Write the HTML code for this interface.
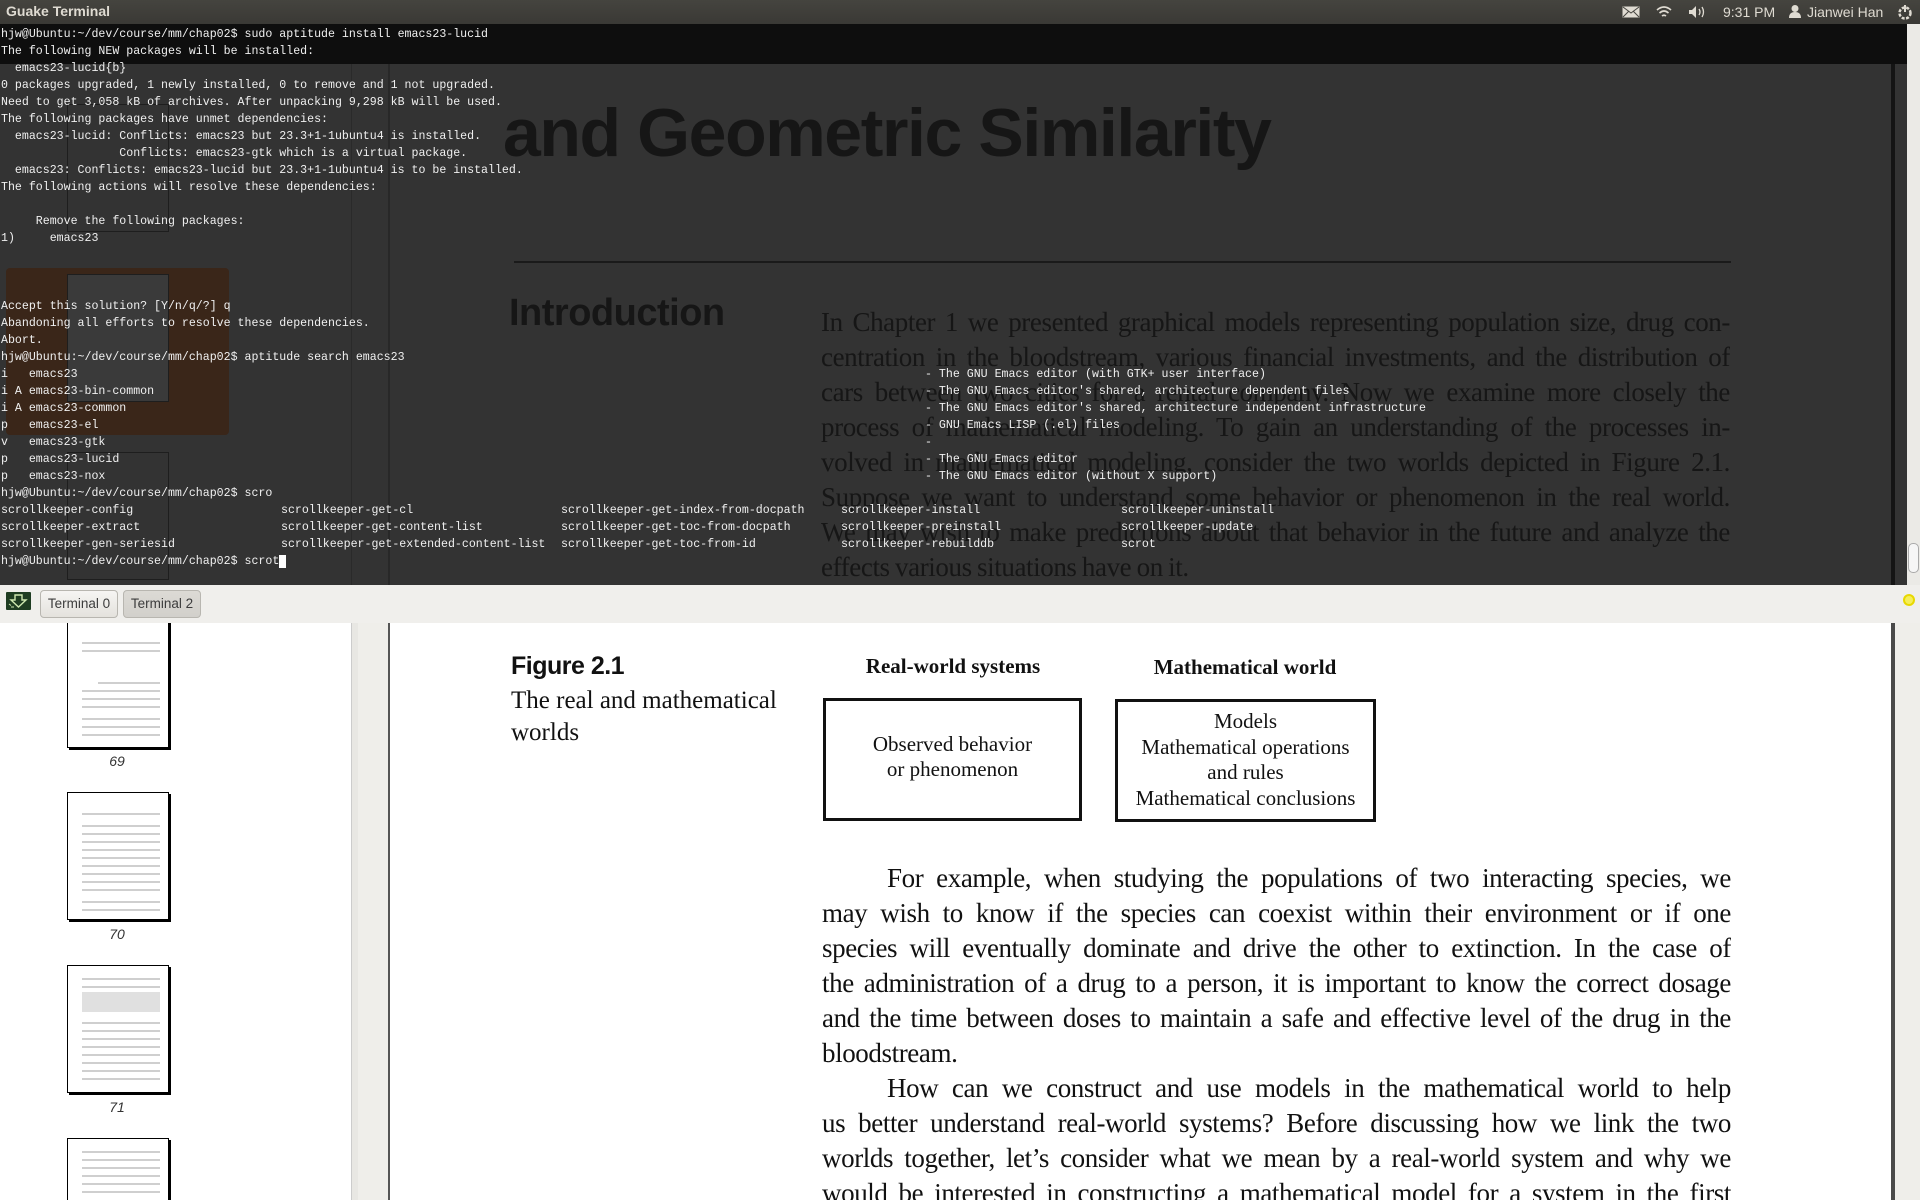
<!DOCTYPE html>
<html><head><meta charset="utf-8"><style>
*{margin:0;padding:0;box-sizing:border-box}
html,body{width:1920px;height:1200px;overflow:hidden}
body{position:relative;background:#fff;font-family:"Liberation Sans",sans-serif}
.abs{position:absolute}
#top{left:0;top:0;width:1920px;height:24px;background:linear-gradient(#45443f,#3a3935);color:#dfdbd2;font-size:14px}
#term{left:0;top:24px;width:1920px;height:561px;background:#333;overflow:hidden}
.mono{font-family:"Liberation Mono",monospace;font-size:11.6px;color:#f0f0f0;white-space:pre;line-height:17px}
.pdfd{color:#161616}
.serif{font-family:"Liberation Serif",serif}
.jl{width:909px;text-align:justify;text-align-last:justify;white-space:nowrap;height:35px;line-height:35px;font-size:27px;letter-spacing:-0.4px;word-spacing:-1px;overflow:hidden}
#tabs{left:0;top:585px;width:1920px;height:38px;background:#f0efec}
.btn{top:5px;height:28px;border:1px solid #b8b6b0;border-radius:4px;background:linear-gradient(#f6f5f3,#e4e2dd);font-size:13.5px;color:#3c3c3c;line-height:26px;padding:0 4px;white-space:nowrap;text-align:center}
.thumb{position:absolute;left:67px;width:102px;background:#fff;border:1px solid #000;box-shadow:2px 2px 0 #000;overflow:hidden}
.tl{position:absolute;left:14px;right:8px;height:2px;background:#cfcfcf}
.num{position:absolute;width:100px;left:67px;text-align:center;font-style:italic;font-size:14px;color:#333}
</style></head><body>

<div id="top" class="abs">
 <div class="abs" style="left:6px;top:3px;font-weight:bold;font-size:14px">Guake Terminal</div>
 <svg class="abs" style="left:1622px;top:6px" width="18" height="12"><rect x="0.5" y="0.5" width="17" height="11" fill="#dfdbd2"/><path d="M1 1 L9 7 L17 1 M1 11 L7 5 M17 11 L11 5" stroke="#45443f" fill="none"/></svg>
 <svg class="abs" style="left:1655px;top:5px" width="18" height="14"><path d="M2 5 Q9 -1 16 5 M4.5 8 Q9 4 13.5 8 M7 11 Q9 9.5 11 11" stroke="#dfdbd2" stroke-width="1.6" fill="none"/></svg>
 <svg class="abs" style="left:1688px;top:5px" width="20" height="14"><path d="M1 5 H4 L8 1 V13 L4 9 H1 Z" fill="#dfdbd2"/><path d="M11 4 Q13 7 11 10 M14 2 Q17 7 14 12" stroke="#dfdbd2" fill="none" stroke-width="1.3"/></svg>
 <div class="abs" style="left:1723px;top:4px;font-size:14px">9:31 PM</div>
 <svg class="abs" style="left:1788px;top:4px" width="14" height="15"><circle cx="7" cy="4.5" r="3.5" fill="#dfdbd2"/><path d="M1 14 Q1 8 7 8 Q13 8 13 14Z" fill="#dfdbd2"/></svg>
 <div class="abs" style="left:1807px;top:4px;font-size:14px">Jianwei Han</div>
 <svg class="abs" style="left:1896px;top:3px" width="18" height="18"><circle cx="9" cy="10" r="5.5" stroke="#dfdbd2" stroke-width="2.5" fill="none" stroke-dasharray="3 1.5"/><path d="M9 2 V9" stroke="#dfdbd2" stroke-width="2"/></svg>
</div>

<div id="term" class="abs">
 <div class="abs" style="left:0;top:0;width:1907px;height:40px;background:#0e0e0e"></div>
 <div class="abs" style="left:351px;top:40px;width:1px;height:521px;background:#2a2a2a"></div>
 <div class="abs" style="left:388px;top:40px;width:2px;height:521px;background:#282828"></div>
 <div class="abs" style="left:6px;top:244px;width:223px;height:167px;background:#3a2619;border-radius:4px"></div>
 <div class="abs" style="left:67px;top:80px;width:102px;height:128px;border:1px solid #1e1e1e"></div>
 <div class="abs" style="left:67px;top:250px;width:102px;height:128px;border:1px solid #1e1e1e;background:#3a3a3a"></div>
 <div class="abs" style="left:67px;top:428px;width:102px;height:128px;border:1px solid #1e1e1e"></div>
 <div class="abs" style="left:1891px;top:40px;width:4px;height:521px;background:#141414"></div>
 <div class="abs" style="left:1907px;top:0;width:13px;height:561px;background:#ebeae6"></div>
 <div class="abs" style="left:1908px;top:519px;width:11px;height:30px;background:#f6f6f6;border:1px solid #aaa;border-radius:5px"></div>
 <div class="abs pdfd" style="left:503px;top:70px;font-weight:bold;font-size:68px;letter-spacing:-1.4px;white-space:nowrap">and Geometric Similarity</div>
 <div class="abs" style="left:514px;top:237px;width:1217px;height:2px;background:#1a1a1a"></div>
 <div class="abs pdfd" style="left:509px;top:268px;font-weight:bold;font-size:38px;letter-spacing:-0.5px">Introduction</div>
 <div class="abs serif pdfd" style="left:821px;top:281px">
  <div class="jl">In Chapter 1 we presented graphical models representing population size, drug con-</div>
  <div class="jl">centration in the bloodstream, various financial investments, and the distribution of</div>
  <div class="jl">cars between two cities for a rental company. Now we examine more closely the</div>
  <div class="jl">process of mathematical modeling. To gain an understanding of the processes in-</div>
  <div class="jl">volved in mathematical modeling, consider the two worlds depicted in Figure 2.1.</div>
  <div class="jl">Suppose we want to understand some behavior or phenomenon in the real world.</div>
  <div class="jl">We may wish to make predictions about that behavior in the future and analyze the</div>
  <div class="jl" style="text-align-last:left">effects various situations have on it.</div>
 </div>
 <div class="abs mono" style="left:1px;top:2px">hjw@Ubuntu:~/dev/course/mm/chap02$ sudo aptitude install emacs23-lucid
The following NEW packages will be installed:
  emacs23-lucid{b}
0 packages upgraded, 1 newly installed, 0 to remove and 1 not upgraded.
Need to get 3,058 kB of archives. After unpacking 9,298 kB will be used.
The following packages have unmet dependencies:
  emacs23-lucid: Conflicts: emacs23 but 23.3+1-1ubuntu4 is installed.
                 Conflicts: emacs23-gtk which is a virtual package.
  emacs23: Conflicts: emacs23-lucid but 23.3+1-1ubuntu4 is to be installed.
The following actions will resolve these dependencies:

     Remove the following packages:
1)     emacs23



Accept this solution? [Y/n/q/?] q
Abandoning all efforts to resolve these dependencies.
Abort.
hjw@Ubuntu:~/dev/course/mm/chap02$ aptitude search emacs23
i   emacs23
i A emacs23-bin-common
i A emacs23-common
p   emacs23-el
v   emacs23-gtk
p   emacs23-lucid
p   emacs23-nox
hjw@Ubuntu:~/dev/course/mm/chap02$ scro
scrollkeeper-config
scrollkeeper-extract
scrollkeeper-gen-seriesid
hjw@Ubuntu:~/dev/course/mm/chap02$ scrot<span style="background:#fff">&nbsp;</span></div>
 <div class="abs mono" style="left:925px;top:342px">- The GNU Emacs editor (with GTK+ user interface)
- The GNU Emacs editor's shared, architecture dependent files
- The GNU Emacs editor's shared, architecture independent infrastructure
- GNU Emacs LISP (.el) files
-
- The GNU Emacs editor
- The GNU Emacs editor (without X support)</div>
 <div class="abs mono" style="left:281px;top:478px">scrollkeeper-get-cl
scrollkeeper-get-content-list
scrollkeeper-get-extended-content-list</div>
 <div class="abs mono" style="left:561px;top:478px">scrollkeeper-get-index-from-docpath
scrollkeeper-get-toc-from-docpath
scrollkeeper-get-toc-from-id</div>
 <div class="abs mono" style="left:841px;top:478px">scrollkeeper-install
scrollkeeper-preinstall
scrollkeeper-rebuilddb</div>
 <div class="abs mono" style="left:1121px;top:478px">scrollkeeper-uninstall
scrollkeeper-update
scrot</div>
</div>

<div id="tabs" class="abs">
 <svg class="abs" style="left:6px;top:7px" width="25" height="18"><rect width="25" height="18" rx="1" fill="#1f3d22"/><path d="M9 3 H16 V8 H20 L12.5 15 L5 8 H9 Z" fill="none" stroke="#cfe8b0" stroke-width="1.4"/><path d="M3 12 L5 13.5 M5 15 H8" stroke="#cfe8b0"/></svg>
 <div class="abs btn" style="left:40px;width:78px">Terminal 0</div>
 <div class="abs btn" style="left:123px;width:78px;background:linear-gradient(#dcdad5,#d2d0cb)">Terminal 2</div>
 <div class="abs" style="left:1903px;top:9px;width:12px;height:12px;border-radius:6px;background:#f5ee5a;border:2px solid #e8d800"></div>
</div>

<div class="abs" style="left:0;top:623px;width:352px;height:577px;background:#fff;overflow:hidden">
 <div class="thumb" style="top:-2px;height:127px">
  <div class="tl" style="top:20px"></div><div class="tl" style="top:28px"></div><div class="tl" style="top:60px;left:30px"></div><div class="tl" style="top:68px"></div><div class="tl" style="top:76px"></div><div class="tl" style="top:84px"></div><div class="tl" style="top:96px"></div><div class="tl" style="top:104px"></div><div class="tl" style="top:112px"></div>
 </div>
 <div class="num" style="top:130px">69</div>
 <div class="thumb" style="top:169px;height:128px">
  <div class="tl" style="top:20px"></div><div class="tl" style="top:32px"></div><div class="tl" style="top:40px"></div><div class="tl" style="top:48px"></div><div class="tl" style="top:56px"></div><div class="tl" style="top:64px"></div><div class="tl" style="top:72px"></div><div class="tl" style="top:80px"></div><div class="tl" style="top:88px"></div><div class="tl" style="top:96px"></div><div class="tl" style="top:108px"></div><div class="tl" style="top:116px"></div>
 </div>
 <div class="num" style="top:303px">70</div>
 <div class="thumb" style="top:342px;height:128px">
  <div class="tl" style="top:12px"></div><div class="tl" style="top:20px"></div><div class="tl" style="top:26px;height:20px;background:#e0e0e0"></div><div class="tl" style="top:56px"></div><div class="tl" style="top:64px"></div><div class="tl" style="top:72px"></div><div class="tl" style="top:80px"></div><div class="tl" style="top:88px"></div><div class="tl" style="top:96px"></div><div class="tl" style="top:104px"></div><div class="tl" style="top:112px"></div>
 </div>
 <div class="num" style="top:476px">71</div>
 <div class="thumb" style="top:515px;height:70px">
  <div class="tl" style="top:12px"></div><div class="tl" style="top:20px"></div><div class="tl" style="top:28px"></div><div class="tl" style="top:36px"></div><div class="tl" style="top:44px"></div><div class="tl" style="top:52px"></div>
 </div>
</div>
<div class="abs" style="left:351px;top:623px;width:7px;height:577px;background:#e8e7e3;border-left:1px solid #ccc"></div>
<div class="abs" style="left:358px;top:623px;width:30px;height:577px;background:#efeeea"></div>
<div class="abs" style="left:388px;top:623px;width:2px;height:577px;background:#555"></div>
<div class="abs" style="left:390px;top:623px;width:1501px;height:577px;background:#fff;overflow:hidden">
 <div class="abs" style="left:121px;top:29px;font-weight:bold;font-size:25px;letter-spacing:-0.5px;color:#111">Figure 2.1</div>
 <div class="abs serif" style="left:121px;top:62px;font-size:25px;line-height:32px;color:#111">The real and mathematical<br>worlds</div>
 <div class="abs serif" style="left:433px;top:31px;width:260px;text-align:center;font-weight:bold;font-size:21px;color:#111">Real-world systems</div>
 <div class="abs serif" style="left:725px;top:32px;width:260px;text-align:center;font-weight:bold;font-size:21px;color:#111">Mathematical world</div>
 <div class="abs serif" style="left:433px;top:75px;width:259px;height:123px;border:3px solid #111;text-align:center;font-size:21px;line-height:25px;padding-top:31px;color:#111">Observed behavior<br>or phenomenon</div>
 <div class="abs serif" style="left:725px;top:76px;width:261px;height:123px;border:3px solid #111;text-align:center;font-size:21px;line-height:25.5px;padding-top:7px;color:#111">Models<br>Mathematical operations<br>and rules<br>Mathematical conclusions</div>
 <div class="abs serif" style="left:432px;top:238px;color:#111">
  <div class="jl" style="padding-left:65px">For example, when studying the populations of two interacting species, we</div>
  <div class="jl">may wish to know if the species can coexist within their environment or if one</div>
  <div class="jl">species will eventually dominate and drive the other to extinction. In the case of</div>
  <div class="jl">the administration of a drug to a person, it is important to know the correct dosage</div>
  <div class="jl">and the time between doses to maintain a safe and effective level of the drug in the</div>
  <div class="jl" style="text-align-last:left">bloodstream.</div>
  <div class="jl" style="padding-left:65px">How can we construct and use models in the mathematical world to help</div>
  <div class="jl">us better understand real-world systems? Before discussing how we link the two</div>
  <div class="jl">worlds together, let’s consider what we mean by a real-world system and why we</div>
  <div class="jl">would be interested in constructing a mathematical model for a system in the first</div>
 </div>
</div>
<div class="abs" style="left:1891px;top:623px;width:4px;height:577px;background:#4a4a4a"></div>
<div class="abs" style="left:1895px;top:623px;width:25px;height:577px;background:#efeeea"></div>
</body></html>
